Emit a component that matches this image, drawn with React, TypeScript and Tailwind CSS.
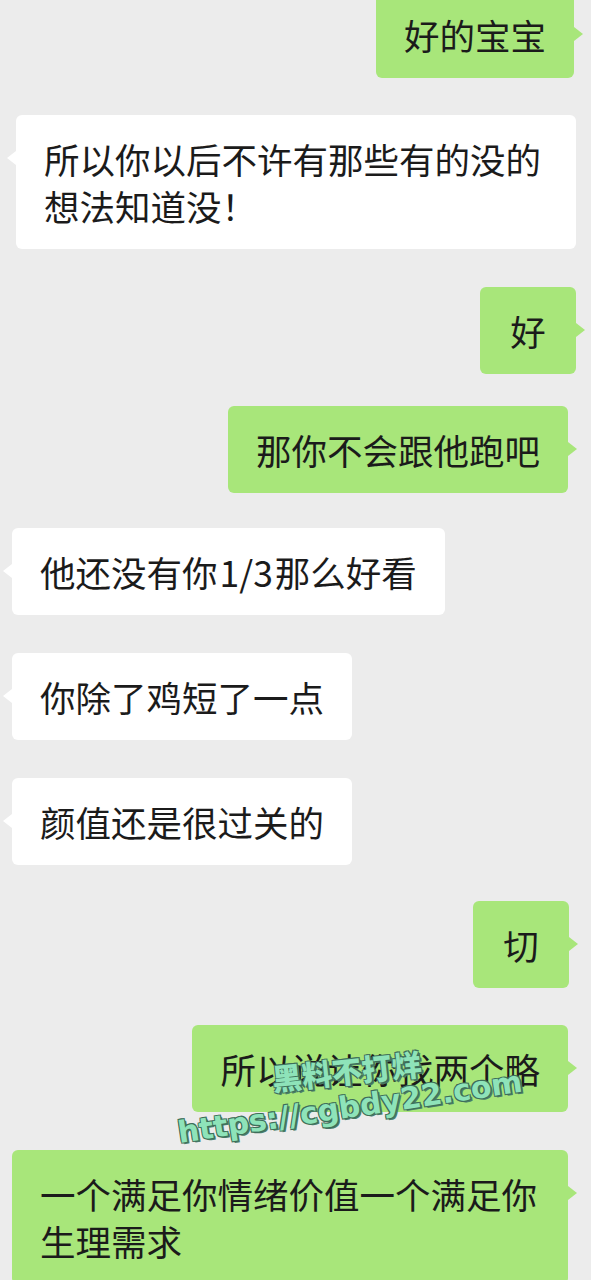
import React from "react";

const GREEN = "bg-[#a8e67a]";

function Bubble({
  side,
  text,
  className = "",
}: {
  side: "left" | "right";
  text: React.ReactNode;
  className?: string;
}) {
  const isRight = side === "right";
  return (
    <div
      className={`relative rounded-[6px] px-[28px] py-[20px] text-[35.5px] leading-[47px] text-[#1b1b1b] ${
        isRight ? GREEN : "bg-white"
      } ${className}`}
    >
      {text}
      {isRight ? (
        <span className="absolute top-[36px] right-[-9px] h-0 w-0 border-y-[7px] border-l-[9px] border-y-transparent border-l-[#a8e67a]" />
      ) : (
        <span className="absolute top-[36px] left-[-9px] h-0 w-0 border-y-[7px] border-r-[9px] border-y-transparent border-r-white" />
      )}
    </div>
  );
}

export default function App() {
  return (
    <div
      className="relative h-[1280px] w-[591px] overflow-hidden bg-[#ececec]"
      style={{ fontFamily: '"Noto Sans CJK SC", "Noto Sans", sans-serif' }}
    >
      <div className="flex flex-col">
        <div className="mt-[-9px] flex justify-end pr-[17px]">
          <Bubble side="right" text="好的宝宝" />
        </div>
        <div className="mt-[37px] flex justify-start pl-[16px]">
          <Bubble
            side="left"
            className="w-[560px]"
            text="所以你以后不许有那些有的没的想法知道没！"
          />
        </div>
        <div className="mt-[38px] flex justify-end pr-[15px]">
          <Bubble side="right" className="min-w-[96px] text-center" text="好" />
        </div>
        <div className="mt-[32px] flex justify-end pr-[23px]">
          <Bubble side="right" text="那你不会跟他跑吧" />
        </div>
        <div className="mt-[35px] flex justify-start pl-[12px]">
          <Bubble
            side="left"
            text={
              <>
                他还没有你<span className="mx-[2px]">1/3</span>那么好看
              </>
            }
          />
        </div>
        <div className="mt-[38px] flex justify-start pl-[12px]">
          <Bubble side="left" text="你除了鸡短了一点" />
        </div>
        <div className="mt-[38px] flex justify-start pl-[12px]">
          <Bubble side="left" text="颜值还是很过关的" />
        </div>
        <div className="mt-[36px] flex justify-end pr-[22px]">
          <Bubble side="right" className="min-w-[96px] text-center" text="切" />
        </div>
        <div className="mt-[37px] flex justify-end pr-[23px]">
          <Bubble side="right" text="所以说让你找两个略" />
        </div>
        <div className="mt-[38px] flex justify-start pl-[12px]">
          <Bubble
            side="right"
            className="w-[556px]"
            text="一个满足你情绪价值一个满足你生理需求"
          />
        </div>
      </div>

      {/* watermark */}
      <div
        className="pointer-events-none absolute left-[272px] top-[1060px] origin-left -rotate-[6deg] whitespace-nowrap text-[30px] font-black leading-[36px] text-[#8ee3b9] [text-shadow:1px_1px_0_#3e6e5a,-1px_-1px_0_#3e6e5a,1px_-1px_0_#3e6e5a,-1px_1px_0_#3e6e5a,2px_2px_0_#4b7d68]"
        style={{ fontFamily: '"Noto Sans CJK SC", sans-serif' }}
      >
        黑料不打烊
      </div>
      <div
        className="pointer-events-none absolute left-[178px] top-[1114px] origin-left -rotate-[8.5deg] whitespace-nowrap text-[30px] font-bold leading-[38px] text-[#8ee3b9] [text-shadow:1px_1px_0_#3e6e5a,-1px_-1px_0_#3e6e5a,1px_-1px_0_#3e6e5a,-1px_1px_0_#3e6e5a,2px_2px_0_#4b7d68]"
        style={{ fontFamily: '"DejaVu Sans", "Liberation Sans", sans-serif' }}
      >
        https://cgbdy22.com
      </div>
    </div>
  );
}
